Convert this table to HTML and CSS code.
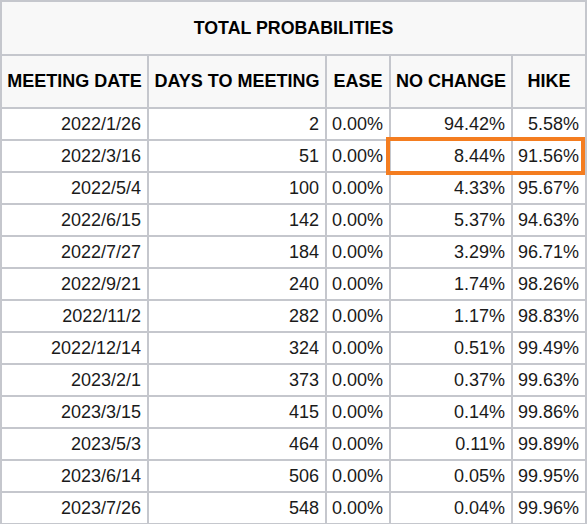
FILE: index.html
```html
<!DOCTYPE html>
<html lang="en">
<head>
    <meta charset="UTF-8">
    <meta name="viewport" content="width=device-width, initial-scale=1.0">
    <title>Total Probabilities</title>
    <link rel="stylesheet" href="styles.css">
</head>
<body>
    <div class="wrap">
        <table class="prob-table">
            <colgroup>
                <col class="c-date">
                <col class="c-days">
                <col class="c-ease">
                <col class="c-nochange">
                <col class="c-hike">
            </colgroup>
            <tr>
                <th class="title" colspan="5">TOTAL PROBABILITIES</th>
            </tr>
            <tr class="head">
                <th>MEETING DATE</th>
                <th>DAYS TO MEETING</th>
                <th>EASE</th>
                <th>NO CHANGE</th>
                <th>HIKE</th>
            </tr>
            <tr><td>2022/1/26</td><td>2</td><td>0.00%</td><td>94.42%</td><td>5.58%</td></tr>
            <tr><td>2022/3/16</td><td>51</td><td>0.00%</td><td>8.44%</td><td>91.56%</td></tr>
            <tr><td>2022/5/4</td><td>100</td><td>0.00%</td><td>4.33%</td><td>95.67%</td></tr>
            <tr><td>2022/6/15</td><td>142</td><td>0.00%</td><td>5.37%</td><td>94.63%</td></tr>
            <tr><td>2022/7/27</td><td>184</td><td>0.00%</td><td>3.29%</td><td>96.71%</td></tr>
            <tr><td>2022/9/21</td><td>240</td><td>0.00%</td><td>1.74%</td><td>98.26%</td></tr>
            <tr><td>2022/11/2</td><td>282</td><td>0.00%</td><td>1.17%</td><td>98.83%</td></tr>
            <tr><td>2022/12/14</td><td>324</td><td>0.00%</td><td>0.51%</td><td>99.49%</td></tr>
            <tr><td>2023/2/1</td><td>373</td><td>0.00%</td><td>0.37%</td><td>99.63%</td></tr>
            <tr><td>2023/3/15</td><td>415</td><td>0.00%</td><td>0.14%</td><td>99.86%</td></tr>
            <tr><td>2023/5/3</td><td>464</td><td>0.00%</td><td>0.11%</td><td>99.89%</td></tr>
            <tr><td>2023/6/14</td><td>506</td><td>0.00%</td><td>0.05%</td><td>99.95%</td></tr>
            <tr><td>2023/7/26</td><td>548</td><td>0.00%</td><td>0.04%</td><td>99.96%</td></tr>
        </table>
        <!-- highlight around the 2022/3/16 no change / hike cells -->
        <div class="highlight"></div>
    </div>
</body>
</html>
```

FILE: styles.css
```css
body {
    margin: 0;
    background-color: #fff;
    font-family: "Liberation Sans", Arial, sans-serif;
    color: #1a1a1a;
}
.wrap {
    position: relative;
    width: 587px;
}
.prob-table {
    width: 587px;
    table-layout: fixed;
    border-collapse: separate;
    border-spacing: 0;
    border-top: 2px solid #c5c7cd;
    border-left: 2px solid #c5c7cd;
}
.c-date { width: 147px; }
.c-days { width: 178px; }
.c-ease { width: 64px; }
.c-nochange { width: 122px; }
.c-hike { width: 74px; }
.prob-table th,
.prob-table td {
    border-right: 2px solid #c5c7cd;
    border-bottom: 2px solid #c5c7cd;
    white-space: nowrap;
    box-sizing: border-box;
}
.prob-table th {
    background-color: #f8f8f8;
    color: #000;
    font-weight: bold;
    font-size: 18px;
    text-align: center;
    padding: 0;
}
.prob-table th.title {
    height: 54px;
    font-size: 17.8px;
}
.head th {
    height: 53px;
}
.prob-table td {
    height: 32px;
    font-size: 18px;
    text-align: right;
    padding: 0 6px 0 4px;
}
.highlight {
    position: absolute;
    left: 386px;
    top: 137px;
    width: 199px;
    height: 38px;
    border: 4px solid #f47d20;
    box-sizing: border-box;
}
```
